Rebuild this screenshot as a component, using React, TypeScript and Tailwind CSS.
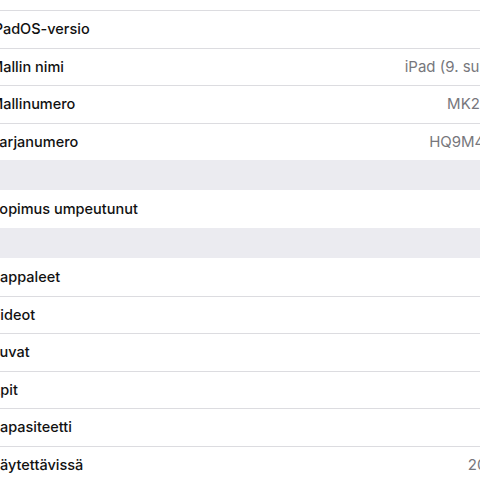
import React from 'react';

type Row = { label: string; value?: string };

const deviceRows: Row[] = [
  { label: 'iPadOS-versio', value: '' },
  { label: 'Mallin nimi', value: 'iPad (9. sukupolvi)' },
  { label: 'Mallinumero', value: 'MK2K3KN/A' },
  { label: 'Sarjanumero', value: 'HQ9M4MXV1Q' },
];

const mediaRows: Row[] = [
  { label: 'Kappaleet', value: '0' },
  { label: 'Videot', value: '0' },
  { label: 'Kuvat', value: '12' },
  { label: 'Apit', value: '9' },
  { label: 'Kapasiteetti', value: '256 Gt' },
  { label: 'Käytettävissä', value: '207,84 Gt' },
];

function SettingsRow({ row, first }: { row: Row; first?: boolean }) {
  return (
    <div
      className={`flex h-[37.5px] items-center justify-between bg-white ${
        first ? '' : 'border-t border-[#dcdce0]'
      }`}
    >
      <span className="text-[14.5px] font-medium text-[#111]">{row.label}</span>
      <span className="text-[15px] text-[#77777c]">{row.value}</span>
    </div>
  );
}

export default function App() {
  return (
    <div
      className="h-[480px] w-[480px] overflow-hidden bg-[#ebebf0]"
      style={{ fontFamily: 'Inter, "Noto Sans", sans-serif' }}
    >
      <div className="ml-[-10px] w-[546px]">
        {/* Laite */}
        <div className="bg-white">
          <div className="h-[10px] bg-white" />
          {deviceRows.map((row) => (
            <SettingsRow key={row.label} row={row} />
          ))}
        </div>

        <div className="h-[30px]" />

        {/* Sopimus */}
        <div className="flex h-[38px] items-center bg-white">
          <span className="text-[14.5px] font-medium text-[#111]">Sopimus umpeutunut</span>
        </div>

        <div className="h-[30px]" />

        {/* Sisältö */}
        <div className="bg-white">
          {mediaRows.map((row, i) => (
            <SettingsRow key={row.label} row={row} first={i === 0} />
          ))}
        </div>
      </div>
    </div>
  );
}
